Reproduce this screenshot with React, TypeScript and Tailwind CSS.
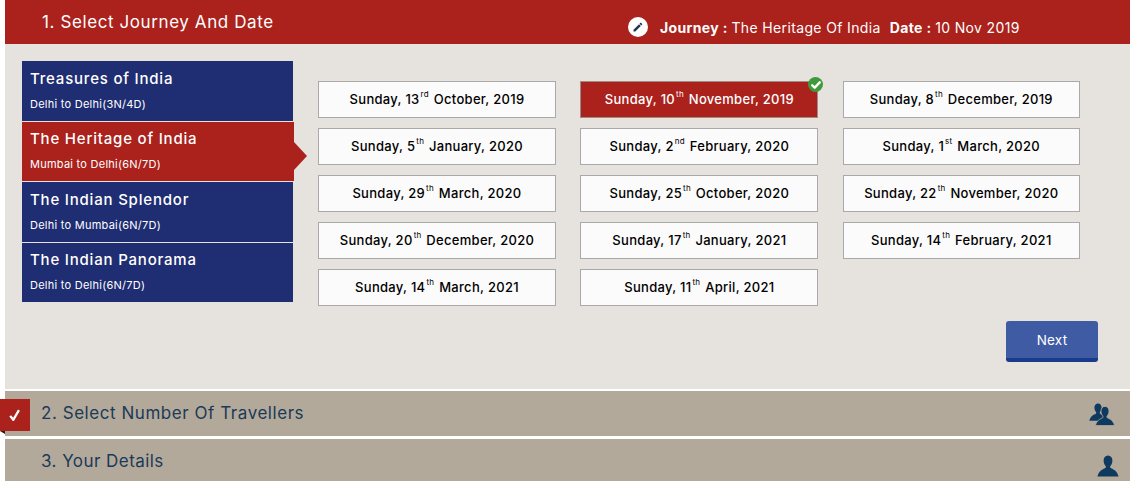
const journeys = [
  { t: "Treasures of India", s: "Delhi to Delhi(3N/4D)", h: "h-[60px]", p: "pt-[8px]" },
  { t: "The Heritage of India", s: "Mumbai to Delhi(6N/7D)", h: "h-[59px]", p: "pt-[7px]", active: true },
  { t: "The Indian Splendor", s: "Delhi to Mumbai(6N/7D)", h: "h-[60px]", p: "pt-[8px]" },
  { t: "The Indian Panorama", s: "Delhi to Delhi(6N/7D)", h: "h-[59px]", p: "pt-[7px]" },
];

const dates: [string, string, string, boolean?][] = [
  ["Sunday, 13", "rd", "October, 2019"],
  ["Sunday, 10", "th", "November, 2019", true],
  ["Sunday, 8", "th", "December, 2019"],
  ["Sunday, 5", "th", "January, 2020"],
  ["Sunday, 2", "nd", "February, 2020"],
  ["Sunday, 1", "st", "March, 2020"],
  ["Sunday, 29", "th", "March, 2020"],
  ["Sunday, 25", "th", "October, 2020"],
  ["Sunday, 22", "th", "November, 2020"],
  ["Sunday, 20", "th", "December, 2020"],
  ["Sunday, 17", "th", "January, 2021"],
  ["Sunday, 14", "th", "February, 2021"],
  ["Sunday, 14", "th", "March, 2021"],
  ["Sunday, 11", "th", "April, 2021"],
];

function Person({ className }: { className?: string }) {
  return (
    <svg viewBox="0 0 24 24" className={className} fill="#0f3a5f">
      <path d="M12 0.500c3 0 4.800 2.300 4.800 5.600 0 2.500-1 4.700-2.200 6-.5.6-.4 1.700.3 2.100 2.700 1.400 7 2.700 8.600 9.300H.5c1.600-6.600 5.900-7.900 8.600-9.300.7-.4.8-1.500.3-2.100C8.200 10.800 7.200 8.600 7.200 6.100 7.200 2.800 9 .5 12 .5z" />
    </svg>
  );
}

export default function App() {
  return (
    <div className="w-[1135px] h-[481px] overflow-hidden bg-white px-[5px] relative font-['Inter',sans-serif]">
      <div className="h-[44px] bg-[#ab211c] flex text-white">
        <div className="pl-[37px] pt-[11px] text-[17px] leading-[22px] tracking-[0.6px] w-[623px]">1. Select Journey And Date</div>
        <div className="flex items-center h-[54px] gap-[12px] text-[14px] tracking-[0.36px]">
          <span className="w-[20px] h-[20px] rounded-full bg-white flex items-center justify-center">
            <svg viewBox="0 0 24 24" className="w-[12px] h-[12px]" fill="#1d3557">
              <path d="M3 17.500V21h3.500L17.600 9.900l-3.500-3.500L3 17.500zM20.300 7.200a1 1 0 0 0 0-1.400l-2.100-2.100a1 1 0 0 0-1.400 0l-1.700 1.700 3.500 3.500 1.700-1.700z" />
            </svg>
          </span>
          <span className="whitespace-nowrap">
            <b className="font-bold">Journey : </b>The Heritage Of India
            <b className="font-bold ml-[9px]">Date : </b>10 Nov 2019
          </span>
        </div>
      </div>

      <div className="h-[345px] bg-[#e6e2dd] pl-[17px] pr-[32px] flex">
        <div className="w-[271px] mt-[17px] flex flex-col gap-[1px] shrink-0">
          {journeys.map((j) => (
            <div key={j.t} className={`${j.h} relative pl-[8px] text-white ${j.active ? "bg-[#ab211c] w-[272px]" : "bg-[#1f2d72]"}`}>
              <div className={`text-[15px] leading-[20px] ${j.p} font-medium tracking-[0.8px]`}>{j.t}</div>
              <div className="text-[11px] leading-[14px] mt-[8px] tracking-[0.25px]">{j.s}</div>
              {j.active && (
                <span className="absolute left-full top-[20px] border-y-[14px] border-y-transparent border-l-[13px] border-l-[#ab211c]" />
              )}
            </div>
          ))}
        </div>
        <div className="ml-[25px] mt-[37px] flex-1">
          <div className="grid grid-cols-[238px_238px_237px] gap-x-[24.400px] gap-y-[10px]">
            {dates.map(([a, sup, b, on]) => (
              <div
                key={a + b}
                className={`h-[37px] relative border flex items-center justify-center pt-[1px] text-[13px] font-medium tracking-[0.3px] ${on ? "bg-[#ab211c] border-[#a08c87] text-white" : "bg-[#fbfbfb] border-[#a9a9a9] text-black"}`}
              >
                <span className="whitespace-nowrap">
                  {a}
                  <sup className="text-[8px] font-normal top-[-7px] relative align-baseline leading-none ml-[1px] mr-[1px]">{sup}</sup> {b}
                </span>
                {on && (
                  <span className="absolute -top-[5px] -right-[6px] w-[15px] h-[15px] rounded-full bg-[#3f9a3c] flex items-center justify-center">
                    <svg viewBox="0 0 16 16" className="w-[12px] h-[12px]" fill="none" stroke="#fff" strokeWidth="3.200" strokeLinecap="round" strokeLinejoin="round">
                      <path d="M3 8.500l3.300 3L13 4.500" />
                    </svg>
                  </span>
                )}
              </div>
            ))}
          </div>
          <div className="flex justify-end mt-[15px]">
            <button className="w-[92px] h-[41px] rounded-[3px] bg-[#3f5ba4] border-b-[4px] border-b-[#1a3a8c] text-white text-[13.500px] tracking-[0.2px] pt-[1px]">Next</button>
          </div>
        </div>
      </div>

      <div className="mt-[2px] h-[45px] bg-[#b3a99b] flex items-center justify-between text-[#1b3a57] pl-[36px] pr-[15px] text-[17px] tracking-[0.55px]">
        <span>2. Select Number Of Travellers</span>
        <span className="relative w-[26px] h-[24px] block">
          <Person className="absolute left-0 top-[1px] w-[18px] h-[18px]" />
          <Person className="absolute right-0 bottom-0 w-[20px] h-[20px] stroke-[#b3a99b] stroke-1" />
        </span>
      </div>
      <div className="mt-[3px] h-[42px] bg-[#b3a99b] flex items-center justify-between text-[#1b3a57] pl-[36px] pr-[11px] text-[17px] tracking-[0.45px]">
        <span className="mt-[4px]">3. Your Details</span>
        <Person className="w-[22px] h-[22px] mt-[11px]" />
      </div>

      <div className="absolute left-0 top-[399px] w-[30px] h-[32px] bg-[#ab211c] text-white flex items-center justify-center">
        <svg viewBox="0 0 16 16" className="w-[14px] h-[14px]" fill="none" stroke="#fff" strokeWidth="2.600" strokeLinejoin="round">
          <path d="M2.500 9l3.500 4.500L12.500 2.500" />
        </svg>
      </div>
      <div className="absolute left-0 top-[431px] border-t-[3px] border-t-[#2a1a1a] border-l-[5px] border-l-transparent" />
    </div>
  );
}
